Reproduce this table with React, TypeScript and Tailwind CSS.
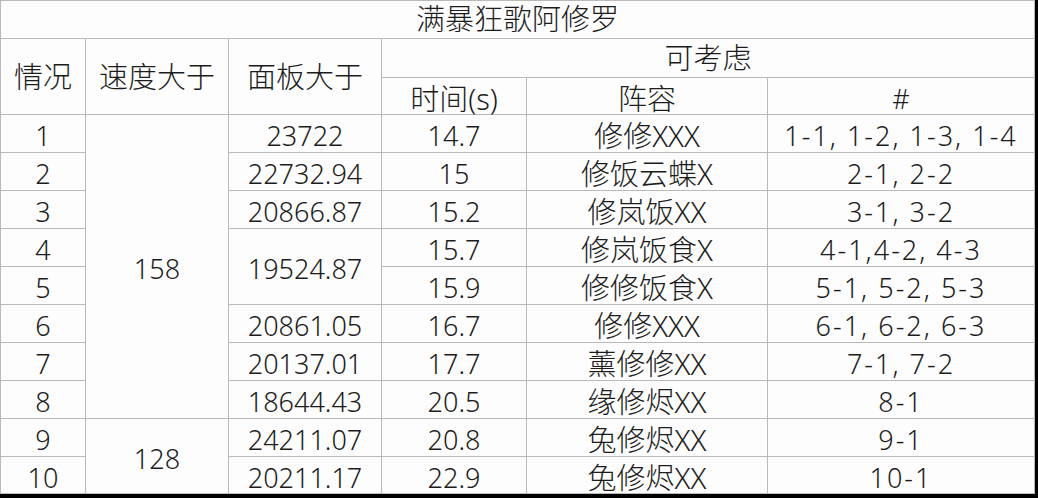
const rows = [
  { n: '1', panel: '23722', time: '14.7', team: '修修XXX', ids: '1-1, 1-2, 1-3, 1-4' },
  { n: '2', panel: '22732.94', time: '15', team: '修饭云蝶X', ids: '2-1, 2-2' },
  { n: '3', panel: '20866.87', time: '15.2', team: '修岚饭XX', ids: '3-1, 3-2' },
  { n: '4', panel: '19524.87', time: '15.7', team: '修岚饭食X', ids: '4-1,4-2, 4-3' },
  { n: '5', panel: null, time: '15.9', team: '修修饭食X', ids: '5-1, 5-2, 5-3' },
  { n: '6', panel: '20861.05', time: '16.7', team: '修修XXX', ids: '6-1, 6-2, 6-3' },
  { n: '7', panel: '20137.01', time: '17.7', team: '薰修修XX', ids: '7-1, 7-2' },
  { n: '8', panel: '18644.43', time: '20.5', team: '缘修烬XX', ids: '8-1' },
  { n: '9', panel: '24211.07', time: '20.8', team: '兔修烬XX', ids: '9-1' },
  { n: '10', panel: '20211.17', time: '22.9', team: '兔修烬XX', ids: '10-1' },
]

const cell = 'border border-[#b9b9b9] p-0 text-center align-middle'
// cells with chinese text are drawn a bit larger in the sheet
const zh = 'text-[29px]'

export default function App() {
  return (
    <div
      className="w-[1038px] h-[498px] bg-black overflow-hidden text-[27px] text-[#1c1c1c] leading-none font-light"
      style={{ fontFamily: '"Noto Sans", "Noto Sans CJK SC", sans-serif' }}
    >
      <table className="table-fixed border-collapse bg-[#fdfdfd] w-[1034px]">
        <colgroup>
          <col className="w-[85px]" />
          <col className="w-[143px]" />
          <col className="w-[153px]" />
          <col className="w-[145px]" />
          <col className="w-[241px]" />
          <col className="w-[267px]" />
        </colgroup>
        <tbody>
          {/* title */}
          <tr className="h-[38px]">
            <td colSpan={6} className={`${cell} ${zh} pb-[2px]`}>满暴狂歌阿修罗</td>
          </tr>

          {/* header */}
          <tr className="h-[39px]">
            <td rowSpan={2} className={`${cell} ${zh}`}>情况</td>
            <td rowSpan={2} className={`${cell} ${zh}`}>速度大于</td>
            <td rowSpan={2} className={`${cell} ${zh}`}>面板大于</td>
            <td colSpan={3} className={`${cell} ${zh} pb-[2px]`}>可考虑</td>
          </tr>
          <tr className="h-[37px]">
            <td className={`${cell} ${zh} pt-[4px]`}>时间(s)</td>
            <td className={`${cell} ${zh} pt-[4px]`}>阵容</td>
            <td className={`${cell} pt-[4px]`}>#</td>
          </tr>

          {rows.map((r, i) => (
            <tr key={r.n} className={i === 9 ? 'h-[37px]' : 'h-[38px]'}>
              <td className={`${cell} pt-[4px]`}>{r.n}</td>
              {i === 0 && (
                <td rowSpan={8} className={`${cell} pt-[4px]`}>158</td>
              )}
              {i === 8 && (
                <td rowSpan={2} className={`${cell} pt-[4px]`}>128</td>
              )}
              {r.panel !== null && (
                <td rowSpan={i === 3 ? 2 : 1} className={`${cell} pt-[4px]`}>
                  {r.panel}
                </td>
              )}
              <td className={`${cell} pt-[4px]`}>{r.time}</td>
              <td className={`${cell} ${zh} pt-[4px]`}>{r.team}</td>
              <td className={`${cell} pt-[4px] tracking-[2px]`}>{r.ids}</td>
            </tr>
          ))}
        </tbody>
      </table>
    </div>
  )
}
